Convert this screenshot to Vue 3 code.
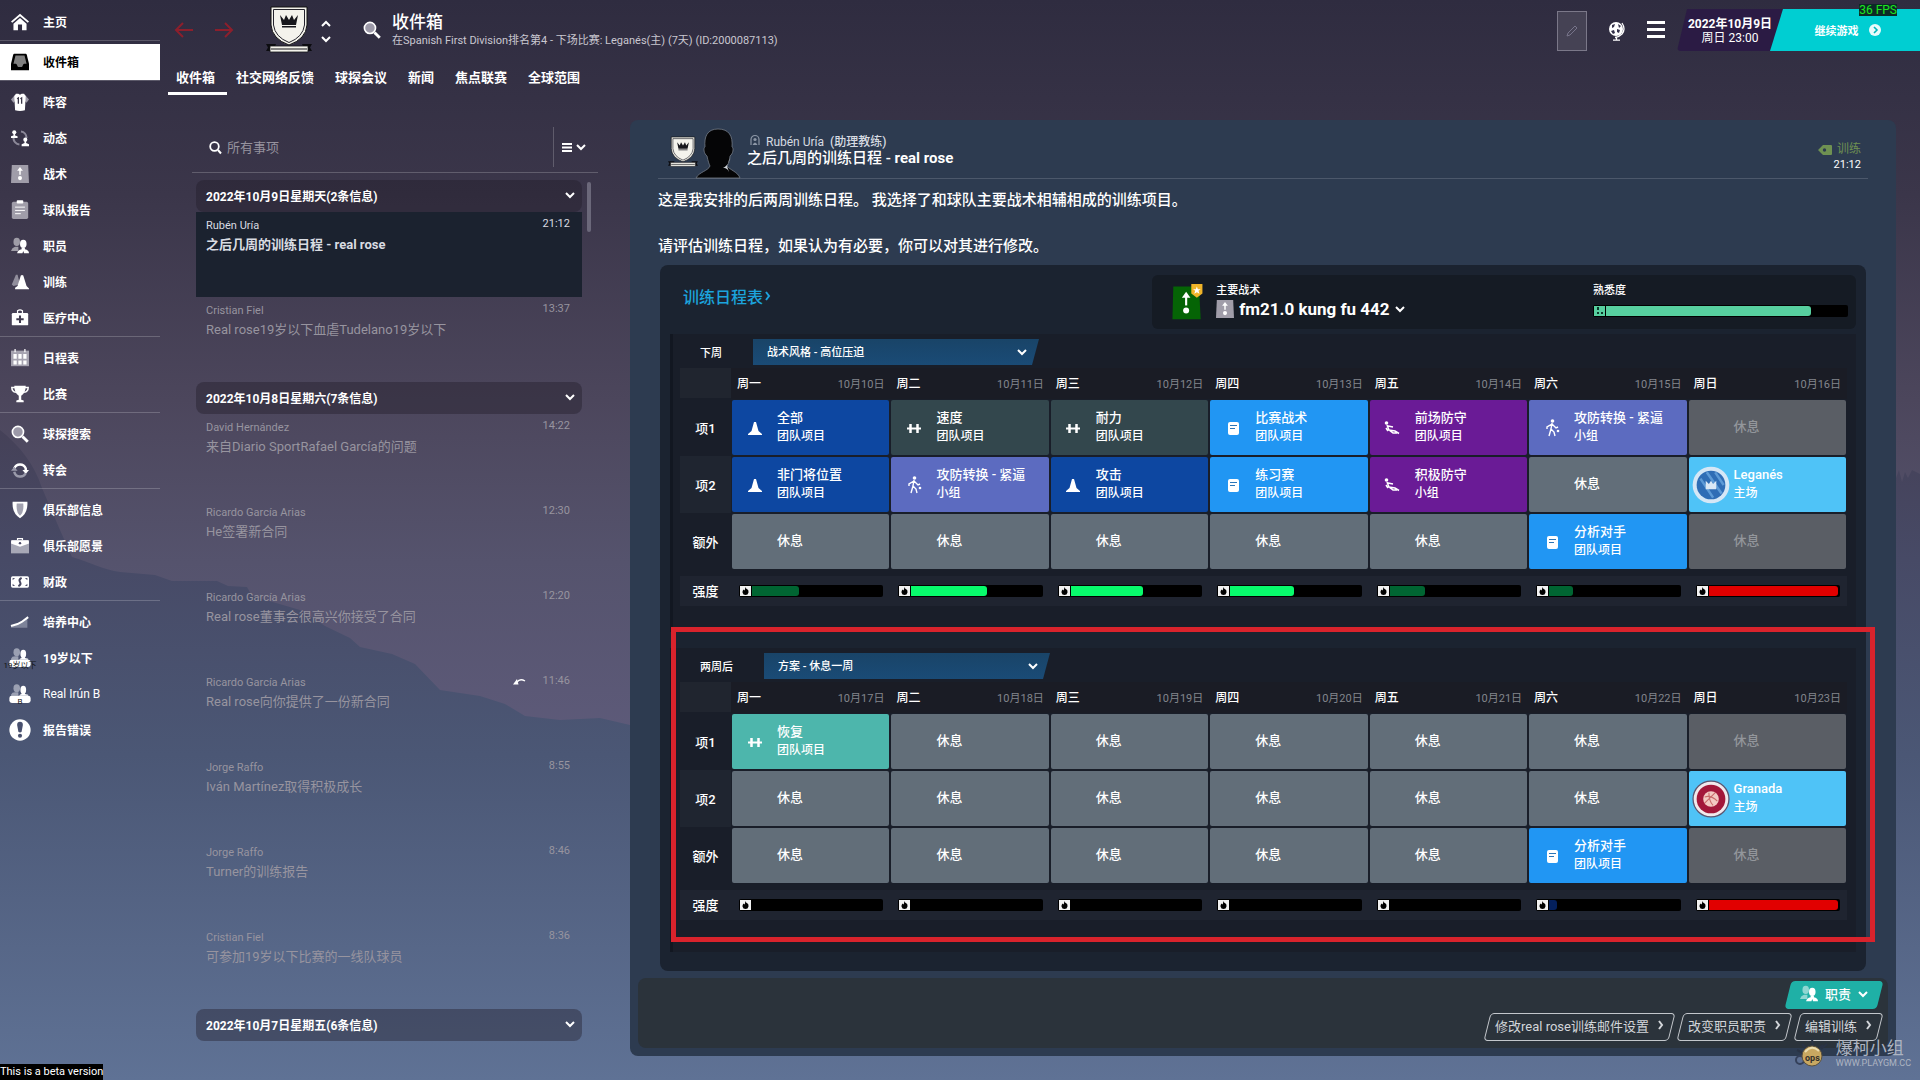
<template>
  <div class="game">
    <svg class="backdrop" viewBox="0 0 1920 1080" preserveAspectRatio="none" aria-hidden="true">
      <defs>
        <linearGradient id="sky" x1="0" y1="0" x2="0" y2="1">
          <stop offset="0" stop-color="#2f2c40" />
          <stop offset="0.18" stop-color="#3b364a" />
          <stop offset="0.37" stop-color="#4c465c" />
          <stop offset="0.52" stop-color="#55536d" />
          <stop offset="0.68" stop-color="#5d5a79" />
          <stop offset="0.8" stop-color="#566080" />
          <stop offset="1" stop-color="#5f7295" />
        </linearGradient>
        <linearGradient id="hill" x1="0" y1="0" x2="0" y2="1">
          <stop offset="0" stop-color="#454158" />
          <stop offset="0.2" stop-color="#474a66" />
          <stop offset="0.5" stop-color="#4b5775" />
          <stop offset="1" stop-color="#5f7295" />
        </linearGradient>
      </defs>
      <rect width="1920" height="1080" fill="url(#sky)" />
      <path d="M0 430C20 446 34 464 42 488L60 530L72 557C90 562 104 570 120 572L155 575L172 581L217 581L228 586L247 587L252 596L300 610L325 626L350 638L360 647L392 654L415 664L440 690L480 696L505 704L525 716L560 720L600 718L630 725L900 700L1300 690L1860 560L1896 478L1899 470L1902 482L1905 472L1908 478L1912 470L1920 474V1080H0Z" fill="url(#hill)" />
    </svg>

    <nav class="sidebar">
      <div v-for="(group, g) in menu" :key="g" class="sidebar__group">
        <a v-for="item in group" :key="item.label" href="#" class="sidebar__item" :class="{ 'sidebar__item--active': item.active, 'sidebar__item--plain': item.badge === 'B' }">
          <svg class="sidebar__icon" viewBox="0 0 22 22" v-html="icons[item.icon]"></svg>
          <span>{{ item.label }}</span>
          <small v-if="item.badge" class="sidebar__badge" :class="{ 'sidebar__badge--wide': item.badge.length > 1 }">{{ item.badge }}</small>
        </a>
      </div>
    </nav>

    <div class="content">
      <header class="topbar">
        <div class="history">
          <button aria-label="后退"><svg width="18" height="16" viewBox="0 0 18 16"><path d="M8 1L1 8L8 15M1 8H18" class="line" /></svg></button>
          <button aria-label="前进"><svg width="18" height="16" viewBox="0 0 18 16"><path d="M10 1L17 8L10 15M17 8H0" class="line" /></svg></button>
        </div>
        <svg class="crest" viewBox="0 0 46 46" v-html="icons.crest"></svg>
        <div class="stepper">
          <button aria-label="上一个"><svg width="10" height="6" viewBox="0 0 10 6"><path d="M1 5L5 1L9 5" class="line" /></svg></button>
          <button aria-label="下一个"><svg width="10" height="6" viewBox="0 0 10 6"><path d="M1 1L5 5L9 1" class="line" /></svg></button>
        </div>
        <svg class="topbar__search" viewBox="0 0 22 22" v-html="icons.search"></svg>
        <div class="heading">
          <h1>收件箱</h1>
          <p>在Spanish First Division排名第4 - 下场比赛: Leganés(主) (7天) (ID:2000087113)</p>
        </div>
        <button class="edit" aria-label="编辑"><svg width="12" height="12" viewBox="0 0 12 12"><path d="M1 11L2 8L9 1L11 3L4 10Z" fill="none" stroke="#77748a" /></svg></button>
        <button class="topbar__icon" aria-label="世界">
          <svg width="18" height="20" viewBox="0 0 18 20">
            <circle cx="8" cy="8" r="7" fill="#fff" />
            <path d="M4 4L7 3L6 6L4 7ZM10 3L13 5L11 7ZM3 10L6 9L7 12L5 13ZM9 8L12 9L11 12L9 11Z" fill="#33304a" />
            <path d="M14 2Q18 8 14 13Q11 16 7 16.500M8.500 16V19M5 19.200H12" fill="none" stroke="#fff" stroke-width="1.300" />
          </svg>
        </button>
        <button class="topbar__icon" aria-label="菜单"><svg width="18" height="18" viewBox="0 0 18 18"><path d="M0 1.500H18M0 8.500H18M0 15.500H18" stroke="#fff" stroke-width="3" /></svg></button>
        <div class="clock">
          <strong>2022年10月9日</strong>
          <span>周日 23:00</span>
        </div>
        <button class="continue">
          继续游戏
          <svg width="12" height="12" viewBox="0 0 12 12"><circle cx="6" cy="6" r="6" fill="#e9fbfb" /><path d="M5 3L8 6L5 9" fill="none" stroke="#00b5b9" stroke-width="1.600" /></svg>
        </button>
        <span class="fps">36 FPS</span>
      </header>

      <nav class="tabs">
        <a v-for="(tab, i) in tabs" :key="tab" href="#" :class="{ current: i === 0 }">{{ tab }}</a>
      </nav>

      <div class="columns">
        <section class="inbox">
          <div class="filter">
            <svg width="13" height="13" viewBox="0 0 13 13"><circle cx="5.500" cy="5.500" r="4.300" fill="none" stroke="#fff" stroke-width="1.800" /><path d="M9 9L12 12.500" stroke="#fff" stroke-width="2" /></svg>
            <input v-model="query" type="text" placeholder="所有事项" aria-label="所有事项">
            <button aria-label="排序">
              <svg width="10" height="9" viewBox="0 0 10 9"><path d="M0 1H10M0 4.500H10M0 8H10" stroke="#fff" stroke-width="2" /></svg>
              <svg width="10" height="6" viewBox="0 0 10 6"><path d="M1 1L5 5L9 1" class="line" /></svg>
            </button>
          </div>
          <div class="list">
            <template v-for="day in days" :key="day.title">
              <button class="day">
                {{ day.title }}
                <svg width="10" height="6" viewBox="0 0 10 6"><path d="M1 1L5 5L9 1" class="line" /></svg>
              </button>
              <a v-for="mail in day.mails" :key="mail.time" href="#" class="mail" :class="{ 'mail--open': mail.open }">
                <span class="mail__top">
                  <span class="mail__from">{{ mail.from }}</span>
                  <svg v-if="mail.replied" width="13" height="7" viewBox="0 0 13 7"><path d="M0 6.500L4 1L5.500 6.500Z" fill="#fff" /><path d="M4 4Q7 0 12 3" fill="none" stroke="#fff" stroke-width="1.400" /></svg>
                  <time>{{ mail.time }}</time>
                </span>
                <span class="mail__subject">{{ mail.subject }}</span>
              </a>
            </template>
            <span class="list__scroll"></span>
          </div>
        </section>

        <main class="reader">
          <article class="letter">
            <header class="letter__head">
              <svg class="letter__crest" viewBox="0 0 46 46" v-html="icons.crest"></svg>
              <svg class="letter__face" viewBox="0 0 44 49">
                <path d="M22 0C11 0 8 8 9 18C7 19 8 25 11 27C12 32 13 35 14 37C12 42 3 43 0 49H44C42 43 34 41 31 37C33 34 34 31 34 27C37 25 38 19 36 18C37 7 33 0 22 0Z" fill="#050506" stroke="#737b86" stroke-width="0.800" />
                <path d="M34 28C33 34 31 37 27 39C31 39 32 41 33 43L31 37Z" fill="#cfd3d8" />
              </svg>
              <div class="letter__title">
                <p>
                  <svg width="10" height="11" viewBox="0 0 10 11"><path d="M1 10V4.500A4 4 0 0 1 9 4.500V10" fill="none" stroke="#8d97a6" stroke-width="1.200" /><circle cx="5" cy="4.500" r="1.600" fill="#8d97a6" /><path d="M2.500 10Q5 5 7.500 10Z" fill="#8d97a6" /></svg>
                  Rubén Uría <b>(助理教练)</b>
                </p>
                <h2>之后几周的训练日程 - <b>real rose</b></h2>
              </div>
              <div class="letter__meta">
                <span class="tag">
                  <svg width="14" height="10" viewBox="0 0 14 10"><path fill-rule="evenodd" d="M5 0H13Q14 0 14 1V9Q14 10 13 10H5L0 5ZM6.500 3.300A1.700 1.700 0 1 0 6.500 6.700A1.700 1.700 0 1 0 6.500 3.300Z" fill="#6f9152" /></svg>
                  训练
                </span>
                <time>21:12</time>
              </div>
            </header>

            <p class="letter__text">这是我安排的后两周训练日程。 我选择了和球队主要战术相辅相成的训练项目。</p>
            <p class="letter__text">请评估训练日程，如果认为有必要，你可以对其进行修改。</p>

            <section class="planner">
              <div class="planner__head">
                <a href="#" class="planner__link">训练日程表<svg width="6" height="10" viewBox="0 0 6 10"><path d="M1 1L4 5L1 9" class="line" /></svg></a>
                <div class="tactic">
                  <svg class="tactic__icon" viewBox="0 0 36 42">
                    <path d="M2 3H32L34 41H1Z" fill="#056405" />
                    <path d="M17 25V12" stroke="#fff" stroke-width="2.500" />
                    <path d="M12 16L17 9L22 16Z" fill="#fff" />
                    <circle cx="17" cy="31" r="3.500" fill="#fff" />
                    <path d="M23 0H36V11L29.500 16L23 11Z" fill="#f0b429" />
                    <path d="M29.500 3L30.700 6H34L31.400 8L32.500 11.500L29.500 9.500L26.500 11.500L27.600 8L25 6H28.300Z" fill="#fff" />
                  </svg>
                  <div class="tactic__name">
                    <label for="tactic">主要战术</label>
                    <div class="tactic__pick">
                      <svg width="18" height="18" viewBox="0 0 22 22" v-html="icons.tactics"></svg>
                      <select id="tactic"><option>fm21.0 kung fu 442</option></select>
                      <svg width="10" height="6" viewBox="0 0 10 6"><path d="M1 1L5 5L9 1" class="line" /></svg>
                    </div>
                  </div>
                  <div class="tactic__level">
                    <span>熟悉度</span>
                    <div class="meter meter--mint">
                      <svg class="meter__icon" width="11" height="10" viewBox="0 0 11 10"><path d="M3 1H5V4H3ZM3 6H5V8H3ZM7 6H9V8H7Z" fill="#0c3b2c" /></svg>
                      <div class="meter__track"><div class="meter__fill mint" :style="{ width: '85%' }"></div></div>
                    </div>
                  </div>
                </div>
              </div>

              <div v-for="(week, w) in weeks" :key="week.name" class="week">
                <div class="week__bar">
                  <label :for="'plan' + w">{{ week.name }}</label>
                  <div class="plan">
                    <select :id="'plan' + w"><option>{{ week.plan }}</option></select>
                    <svg width="10" height="6" viewBox="0 0 10 6"><path d="M1 1L5 5L9 1" class="line" /></svg>
                  </div>
                </div>
                <table>
                  <thead>
                    <tr>
                      <td></td>
                      <th v-for="(name, i) in weekdays" :key="name" scope="col">
                        <div class="date"><span>{{ name }}</span><small>10月{{ week.start + i }}日</small></div>
                      </th>
                    </tr>
                  </thead>
                  <tbody>
                    <tr v-for="row in week.rows" :key="row.label">
                      <th scope="row">{{ row.label }}</th>
                      <td v-for="(cell, i) in row.cells" :key="i">
                        <div class="cell" :class="cell.kind">
                          <span class="cell__icon"><svg v-if="cell.icon" :width="cell.size || 18" :height="cell.size || 18" viewBox="0 0 18 18" v-html="icons[cell.icon]"></svg></span>
                          <span class="cell__text">{{ cell.title }}<small v-if="cell.note">{{ cell.note }}</small></span>
                        </div>
                      </td>
                    </tr>
                  </tbody>
                  <tfoot>
                    <tr>
                      <th scope="row">强度</th>
                      <td v-for="(load, i) in week.loads" :key="i">
                        <div class="meter">
                          <svg class="meter__icon" width="11" height="10" viewBox="0 0 11 10"><path d="M5 1Q6 3 7 3Q9 4 8.500 6.500Q8 9 5.500 9Q3 9 2.500 6.500Q2.300 5 3.500 3.500L4.500 4.500Q5.500 3 5 1Z" fill="#000" /></svg>
                          <div class="meter__track"><div class="meter__fill" :class="load[1]" :style="{ width: load[0] + '%' }"></div></div>
                        </div>
                      </td>
                    </tr>
                  </tfoot>
                </table>
                <div v-if="week.marked" class="week__mark"></div>
              </div>
            </section>
          </article>

          <footer class="actions">
            <button class="pill pill--solid">
              <svg width="18" height="18" viewBox="0 0 22 22" v-html="icons.people"></svg>
              职责
              <svg width="10" height="6" viewBox="0 0 10 6"><path d="M1 1L5 5L9 1" class="line" /></svg>
            </button>
            <div class="actions__row">
              <button v-for="action in actions" :key="action" class="pill">
                {{ action }}
                <svg width="6" height="10" viewBox="0 0 6 10"><path d="M1 1L4 5L1 9" class="line" /></svg>
              </button>
            </div>
          </footer>
        </main>
      </div>
    </div>

    <div class="beta">This is a beta version</div>
    <div class="watermark">
      <svg width="36" height="36" viewBox="0 0 36 36">
        <path d="M8 8L13 13M18 3L19 10M3 14L9 17M27 13L33 8M25 12L29 9" stroke="#2a3345" stroke-width="2" />
        <circle cx="6" cy="24" r="4" fill="none" stroke="#34405a" stroke-width="2" />
        <circle cx="18" cy="20" r="10" fill="#c9a861" stroke="#5b5140" />
        <path d="M11 16Q18 8 25 15" stroke="#ecdcae" stroke-width="2" fill="none" />
        <text x="11" y="25" font-size="9" font-weight="700" fill="#33302c">ops</text>
      </svg>
      <div><b>爆柯小组</b><span>WWW.PLAYGM.CC</span></div>
    </div>
  </div>
</template>

<script setup>
import { ref } from 'vue'

const query = ref('')

// inner markup of the icons, 22x22 for the menu and 18x18 for the sessions
const icons = {
  home: '<path fill="#fff" d="M11 1L22 10.500L20.500 12L11 4L1.500 12L0 10.500ZM11 6L19 13V21H13.500V14H8.500V21H3V13Z"/>',
  inbox: '<path fill="#000" d="M4 1H18Q19 1 19.300 2L22 13V21H0V13L2.700 2Q3 1 4 1Z"/><path fill="#808080" d="M5.500 3H16.500L19 13H16Q15 13 14.500 15Q14 17 13 17H9Q8 17 7.500 15Q7 13 6 13H3Z"/>',
  shirt: '<path fill="#9b98a6" d="M5 2L0 8L3 12L6 9ZM17 2L22 8L19 12L16 9Z"/><path fill="#fff" d="M6 1H9Q11 3 13 1H16L18 4L17 21Q11 23 5 21L4 4Z"/><path d="M7.500 7L9 6V13M11.500 7L13 6V13" fill="none" stroke="#3a3648" stroke-width="1.600"/>',
  dynamics: '<circle cx="11" cy="11" r="8" fill="none" stroke="#8b8898" stroke-width="2.500" stroke-dasharray="12 13" stroke-dashoffset="12"/><circle cx="4" cy="4" r="2.500" fill="#fff"/><path fill="#fff" d="M3 5H5V8L8 9V11H0V9L3 8Z"/><circle cx="17.500" cy="13" r="2.500" fill="#fff"/><path fill="#fff" d="M16.500 14H18.500V17L22 18.500V21H13V18.500L16.500 17Z"/>',
  tactics: '<path fill="#a09da9" d="M1 0H21L22 22H0Z"/><path d="M11 12V5" stroke="#fff" stroke-width="1.800"/><path fill="#fff" d="M7.500 7L11 2.500L14.500 7Z"/><circle cx="11" cy="16" r="2.500" fill="#fff"/>',
  report: '<rect x="1" y="1" width="20" height="21" rx="2" fill="#a09da9"/><rect x="7" y="-1" width="8" height="4" rx="1" fill="#fff"/><path d="M5 7.500H17M5 11.500H17M5 15.500H12" stroke="#fff" stroke-width="1.200"/>',
  people: '<g fill="#fff" opacity=".5"><ellipse cx="7" cy="6" rx="4" ry="5"/><path d="M0 17Q1 13 5 12H9V17Z"/></g><ellipse cx="15" cy="8.500" rx="4" ry="5" fill="#fff"/><path fill="#fff" d="M7.500 20Q8 16 13 15V13H17V15Q22 16 22 20H16L15 17L14 20Z"/>',
  cones: '<path fill="#918e9c" d="M6 2L8 2L11 14L3 16L1 14Z"/><path fill="#fff" d="M12 3Q13.500 2 15 3L19 16L22 19V20H5V18L8 16Z"/>',
  medical: '<path d="M8 5V2Q11 0 14 2V5" fill="none" stroke="#fff" stroke-width="1.500"/><rect x="1" y="5" width="20" height="15" rx="1.500" fill="#fff"/><path d="M11 8V17M6.500 12.500H15.500" stroke="#3f3a4e" stroke-width="2.500"/>',
  calendar: '<path fill="#a6a3b0" d="M0 2H22V21H0Z"/><path fill="#fff" d="M3 6H7V12H3ZM9 6H13V12H9ZM15 6H19V12H15ZM3 14H7V19H3ZM9 14H13V19H9ZM15 14H19V19H15Z"/><path d="M5 0V4M17 0V4" stroke="#fff" stroke-width="1.500"/>',
  cup: '<path fill="#fff" d="M4 1H18Q18 10 12.500 13V18L15.500 19V21H6.500V19L9.500 18V13Q4 10 4 1Z"/><path d="M5 3H1Q1 8 6 9M17 3H21Q21 8 16 9" fill="none" stroke="#fff" stroke-width="1.800"/>',
  search: '<circle cx="8.500" cy="8.500" r="6.800" fill="#9c99a8" stroke="#fff" stroke-width="2"/><path d="M14 14L20.500 20.500" stroke="#fff" stroke-width="3.500"/>',
  transfer: '<path d="M4 9A7.500 7.500 0 0 1 18 9V12" fill="none" stroke="#fff" stroke-width="3"/><path d="M14 11H22L18 16Z" fill="#fff"/><path d="M18 15A7.500 7.500 0 0 1 4 13" fill="none" stroke="#9a9aaa" stroke-width="3"/><path d="M0 12H8L4 7Z" fill="#9a9aaa"/>',
  shield: '<path fill="#fff" d="M2 1H20Q21 15 11 21Q1 15 2 1Z"/><path fill="#a2a2b0" d="M7 3H15Q16 14 11 18Q6 14 7 3Z"/>',
  briefcase: '<path d="M8 4V2H14V4" fill="none" stroke="#fff" stroke-width="1.500"/><path fill="#a7a8b6" d="M0 4H22V20H0Z"/><path fill="#fff" d="M1 4H21Q22 4 22 8L11 12L0 8Q0 4 1 4Z"/><circle cx="11" cy="7.500" r="1.500" fill="#4a4a66"/>',
  money: '<rect x="0" y="4" width="22" height="14" rx="2" fill="#fff"/><path d="M2 6H5L2 9ZM20 6H17L20 9ZM2 16H5L2 13ZM20 16H17L20 13Z" fill="#55556f"/><path d="M13 6Q9 8 11 11T9 16" fill="none" stroke="#45455f" stroke-width="2.500"/>',
  growth: '<path fill="#7d8399" d="M0 17L10 13L20 6V18H0Z"/><path d="M0 16L8 13.500L13 11L21 5" fill="none" stroke="#fff" stroke-width="2.500"/>',
  squad: '<g fill="#9ba0b2"><ellipse cx="7" cy="4" rx="4" ry="5"/><path d="M0 12Q1 9 5 9H9V13H0Z"/></g><ellipse cx="15" cy="6" rx="3.500" ry="5" fill="#fff"/><path d="M10 13Q11 11 13 11V9H17V11L21 12V13Z" fill="#fff"/><rect x="-2" y="13" width="26" height="9" rx="3" fill="#fff"/>',
  alert: '<circle cx="11" cy="11" r="13" fill="#fff"/><path fill="#48506e" d="M7.500 5Q7.500 1 11 1T14.500 5L13 13Q11 15 9 13Z"/><circle cx="11" cy="18" r="2.500" fill="#48506e"/>',
  crest: '<path fill="#f4f3ec" stroke="#111" stroke-width="1" d="M5 0H41V18Q40 32 23 38Q6 32 5 18Z"/><path fill="none" stroke="#24232c" d="M7.500 2.500H38.500V18Q37 30 23 35.500Q9 30 7.500 18Z"/><path fill="#17171c" d="M14 8L18 13L20 8L23 13L26 8L28 13L32 8L30 18H16ZM16 19H30V20.500H16Z"/><path fill="#0c0c10" d="M0 37H10L7 44H0L2 40.500ZM46 37H36L39 44H46L44 40.500Z"/><path fill="#f4f3ec" stroke="#15151a" stroke-width=".8" d="M4 39H42V45H4Z"/><path d="M5 42H41" stroke="#15151a"/>',
  cone: '<path fill="#fff" d="M8 3H10L12.500 12L16 15V16H2V15L5.500 12Z"/>',
  weights: '<path d="M5.500 5V14M12.500 5V14" stroke="#fff" stroke-width="2.500"/><path d="M2 9.500H16" stroke="#fff" stroke-width="2"/>',
  paper: '<rect x="4" y="3" width="11" height="13" rx="2" fill="#fff"/><path d="M6 6.500H13M6 9.500H11" stroke="#2b76b8" stroke-width="1.200"/>',
  tackle: '<circle cx="3.500" cy="4" r="1.800" fill="#fff"/><path d="M4 6L6 11L12 12L16 14.500M6 11L10 14H14M5 7L10 8M3 9L5 12" fill="none" stroke="#fff" stroke-width="1.500"/>',
  runner: '<circle cx="9.500" cy="2" r="1.800" fill="#fff"/><path d="M9 4L8 10L11 13L12 17M8 10L6 17M9 5L4 8V10M9 5L13 9L15 8" fill="none" stroke="#fff" stroke-width="1.400"/><circle cx="15" cy="12" r="1.300" fill="#fff"/>',
  leganes: '<circle cx="9" cy="9" r="8.700" fill="#d5e7f6"/><circle cx="9" cy="9" r="6.800" fill="#2f6db5"/><path d="M4 6L10 15M7 3L14 13M11 3L15 9" stroke="#5d9ad6" stroke-width="1.200"/><path fill="#dbe8f5" d="M6.500 7L8 8.500L9 7L10 8.500L11.500 7V11H6.500Z"/>',
  granada: '<circle cx="9" cy="9" r="8.500" fill="#f2e9ec" stroke="#5c5570" stroke-width=".6"/><circle cx="9" cy="9" r="6.800" fill="#a3173a"/><circle cx="9" cy="9" r="3.700" fill="#f3c9c2"/><path d="M6 8Q9 7 12 10M8 6Q8 10 10 12M11 6Q9 8 6 11" fill="none" stroke="#c96a6a" stroke-width=".5"/>',
}

const menu = [
  [{ label: '主页', icon: 'home' }],
  [{ label: '收件箱', icon: 'inbox', active: true }],
  [
    { label: '阵容', icon: 'shirt' },
    { label: '动态', icon: 'dynamics' },
    { label: '战术', icon: 'tactics' },
    { label: '球队报告', icon: 'report' },
    { label: '职员', icon: 'people' },
    { label: '训练', icon: 'cones' },
    { label: '医疗中心', icon: 'medical' },
  ],
  [{ label: '日程表', icon: 'calendar' }, { label: '比赛', icon: 'cup' }],
  [{ label: '球探搜索', icon: 'search' }, { label: '转会', icon: 'transfer' }],
  [
    { label: '俱乐部信息', icon: 'shield' },
    { label: '俱乐部愿景', icon: 'briefcase' },
    { label: '财政', icon: 'money' },
  ],
  [
    { label: '培养中心', icon: 'growth' },
    { label: '19岁以下', icon: 'squad', badge: '19岁以下' },
    { label: 'Real Irún B', icon: 'squad', badge: 'B' },
    { label: '报告错误', icon: 'alert' },
  ],
]

const tabs = ['收件箱', '社交网络反馈', '球探会议', '新闻', '焦点联赛', '全球范围']

const days = [
  {
    title: '2022年10月9日星期天(2条信息)',
    mails: [
      { from: 'Rubén Uría', time: '21:12', subject: '之后几周的训练日程 - real rose', open: true },
      { from: 'Cristian Fiel', time: '13:37', subject: 'Real rose19岁以下血虐Tudelano19岁以下' },
    ],
  },
  {
    title: '2022年10月8日星期六(7条信息)',
    mails: [
      { from: 'David Hernández', time: '14:22', subject: '来自Diario SportRafael García的问题' },
      { from: 'Ricardo García Arias', time: '12:30', subject: 'He签署新合同' },
      { from: 'Ricardo García Arias', time: '12:20', subject: 'Real rose董事会很高兴你接受了合同' },
      { from: 'Ricardo García Arias', time: '11:46', subject: 'Real rose向你提供了一份新合同', replied: true },
      { from: 'Jorge Raffo', time: '8:55', subject: 'Iván Martínez取得积极成长' },
      { from: 'Jorge Raffo', time: '8:46', subject: 'Turner的训练报告' },
      { from: 'Cristian Fiel', time: '8:36', subject: '可参加19岁以下比赛的一线队球员' },
    ],
  },
  { title: '2022年10月7日星期五(6条信息)', mails: [] },
]

const weekdays = ['周一', '周二', '周三', '周四', '周五', '周六', '周日']

const rest = { kind: 'rest', title: '休息' }
const off = { kind: 'off', title: '休息' }
const team = (kind, icon, title, note = '团队项目') => ({ kind, icon, title, note })
const match = (icon, title) => ({ kind: 'match', icon, title, note: '主场', size: 38 })

const weeks = [
  {
    name: '下周',
    plan: '战术风格 - 高位压迫',
    start: 10,
    rows: [
      {
        label: '项1',
        cells: [
          team('navy', 'cone', '全部'),
          team('slate', 'weights', '速度'),
          team('slate', 'weights', '耐力'),
          team('blue', 'paper', '比赛战术'),
          team('purple', 'tackle', '前场防守'),
          team('indigo', 'runner', '攻防转换 - 紧逼', '小组'),
          off,
        ],
      },
      {
        label: '项2',
        cells: [
          team('navy', 'cone', '非门将位置'),
          team('indigo', 'runner', '攻防转换 - 紧逼', '小组'),
          team('navy', 'cone', '攻击'),
          team('blue', 'paper', '练习赛'),
          team('purple', 'tackle', '积极防守', '小组'),
          rest,
          match('leganes', 'Leganés'),
        ],
      },
      { label: '额外', cells: [rest, rest, rest, rest, rest, team('blue', 'paper', '分析对手'), off] },
    ],
    loads: [[36, 'low'], [58, 'mid'], [55, 'mid'], [49, 'mid'], [27, 'low'], [18, 'low'], [99, 'high']],
  },
  {
    name: '两周后',
    plan: '方案 - 休息一周',
    start: 17,
    marked: true,
    rows: [
      { label: '项1', cells: [team('teal', 'weights', '恢复'), rest, rest, rest, rest, rest, off] },
      { label: '项2', cells: [rest, rest, rest, rest, rest, rest, match('granada', 'Granada')] },
      { label: '额外', cells: [rest, rest, rest, rest, rest, team('blue', 'paper', '分析对手'), off] },
    ],
    loads: [[0, 'low'], [0, 'low'], [0, 'low'], [0, 'low'], [0, 'low'], [6, 'faint'], [99, 'high']],
  },
]

const actions = ['修改real rose训练邮件设置', '改变职员职责', '编辑训练']
</script>

<style>
body {
  margin: 0;
  background: #2f2c40;
}
</style>

<style scoped>
.game {
  position: relative;
  display: flex;
  min-height: 100vh;
  color: #fff;
  font-family: Roboto, "Noto Sans CJK SC", sans-serif;
  font-size: 12px;
}
.game * {
  box-sizing: border-box;
}
.backdrop {
  position: absolute;
  inset: 0;
  width: 100%;
  height: 100%;
}
svg {
  flex: none;
  overflow: visible;
}
.line {
  fill: none;
  stroke: currentColor;
  stroke-width: 2;
}
a {
  color: inherit;
  text-decoration: none;
}
button, select, input {
  padding: 0;
  border: 0;
  background: none;
  color: inherit;
  font: inherit;
  appearance: none;
}
h1, h2, p {
  margin: 0;
}

/* sidebar */
.sidebar {
  position: relative;
  flex: none;
  width: 160px;
  padding-top: 4px;
}
.sidebar__group {
  padding-bottom: 3px;
}
.sidebar__group::after {
  content: "";
  display: block;
  height: 1px;
  background: rgba(255, 255, 255, 0.2);
}
.sidebar__group:last-child::after {
  display: none;
}
.sidebar__item {
  position: relative;
  display: flex;
  align-items: center;
  gap: 14px;
  height: 36px;
  padding: 0 0 1px 11px;
  font-weight: 700;
}
.sidebar__item--active {
  background: #fff;
  color: #000;
}
.sidebar__item--plain {
  font-weight: 400;
}
.sidebar__icon {
  width: 18px;
  height: 18px;
}
.sidebar__badge {
  position: absolute;
  left: 10px;
  top: 19px;
  width: 20px;
  color: #222;
  font-size: 8px;
  font-weight: 400;
  line-height: 14px;
  text-align: center;
}
.sidebar__badge--wide {
  left: 3px;
  width: 34px;
  color: #111;
}

/* top bar */
.content {
  position: relative;
  flex: 1;
  min-width: 0;
}
.topbar {
  display: flex;
  align-items: flex-start;
  height: 60px;
  padding-left: 15px;
}
.history {
  display: flex;
  gap: 22px;
  padding-top: 22px;
  color: #8c1f2c;
}
.crest {
  width: 46px;
  height: 46px;
  margin: 7px 9px 0 33px;
}
.stepper {
  display: flex;
  flex-direction: column;
  gap: 9px;
  padding-top: 21px;
}
.history button, .stepper button {
  display: flex;
}
.topbar__search {
  width: 18px;
  height: 18px;
  margin: 21px 11px 0 32px;
}
.heading {
  flex: 1;
  padding-top: 10px;
  white-space: nowrap;
}
.heading h1 {
  font-size: 17px;
  font-weight: 500;
  line-height: 24px;
}
.heading p {
  color: #c9c7d0;
  font-size: 11px;
  line-height: 14px;
}
.edit {
  display: grid;
  place-items: center;
  width: 30px;
  height: 40px;
  margin-top: 11px;
  border: 1px solid #7b7889;
  background: #454254;
}
.topbar__icon {
  display: flex;
  margin: 21px 0 0 21px;
}
.clock {
  display: flex;
  flex-direction: column;
  align-items: center;
  width: 108px;
  height: 42px;
  margin: 9px -15px 0 12px;
  padding: 8px 2px 0 0;
  background: #2b1b44;
  border-radius: 4px;
  clip-path: polygon(10px 0, 100% 0, 100% 100%, 0 100%);
  line-height: 14px;
  white-space: nowrap;
}
.clock strong {
  font-weight: 700;
}
.continue {
  display: flex;
  align-items: center;
  justify-content: center;
  gap: 10px;
  width: 150px;
  height: 42px;
  margin-top: 9px;
  padding-left: 5px;
  background: #00ced2;
  clip-path: polygon(13px 0, 100% 0, 100% 100%, 0 100%);
  font-size: 11px;
  font-weight: 700;
}
.fps {
  position: absolute;
  top: 4px;
  right: 23px;
  background: #0c2a26;
  color: #1ee61e;
  font-size: 12px;
  line-height: 12px;
}
.tabs {
  display: flex;
  gap: 5px;
  height: 35px;
  padding-left: 8px;
}
.tabs a {
  padding: 8px 8px 0;
  font-size: 13px;
  font-weight: 700;
  line-height: 20px;
}
.tabs .current {
  margin-right: -4px;
  padding-right: 12px;
  border-bottom: 3px solid #fff;
}

/* inbox */
.columns {
  display: grid;
  grid-template-columns: minmax(300px, 406fr) 1266fr;
  gap: 32px;
  padding: 25px 24px 24px 32px;
}
.filter {
  display: flex;
  align-items: center;
  height: 53px;
  padding: 7px 12px 5px 17px;
  border-bottom: 1px solid rgba(255, 255, 255, 0.2);
}
.filter input {
  flex: 1;
  min-width: 0;
  padding-left: 5px;
  font-size: 13px;
  outline: 0;
}
.filter input::placeholder {
  color: #96939f;
}
.filter button {
  display: flex;
  align-items: center;
  gap: 4px;
  height: 40px;
  padding-left: 8px;
  border-left: 1px solid rgba(255, 255, 255, 0.2);
}
.list {
  position: relative;
  display: flex;
  flex-direction: column;
  padding: 7px 16px 0 4px;
}
.list__scroll {
  position: absolute;
  top: 9px;
  right: 7px;
  width: 4px;
  height: 50px;
  border-radius: 2px;
  background: #6b687a;
}
.day {
  display: flex;
  align-items: center;
  justify-content: space-between;
  height: 32px;
  padding: 0 7px 2px 10px;
  border-radius: 8px;
  background: rgba(32, 28, 40, 0.4);
  font-weight: 700;
}
.mail {
  height: 85px;
  padding: 5px 12px 0 10px;
  color: #97949f;
}
.mail__top {
  display: flex;
  font-size: 11px;
  line-height: 14px;
}
.mail__from {
  flex: 1;
  padding-top: 2px;
}
.mail__top svg {
  margin: 4px 17px 0 0;
}
.mail__subject {
  display: block;
  padding-top: 2px;
  font-size: 13px;
  line-height: 20px;
}
.mail--open {
  background: #1b222f;
  color: #d9dce2;
}
.mail--open .mail__subject {
  font-weight: 700;
}

/* reader */
.reader {
  display: flex;
  flex-direction: column;
  justify-content: space-between;
  gap: 7px;
  padding-bottom: 8px;
  border-radius: 8px;
  background: #2d3b50;
}
.letter {
  padding: 8px 28px 0;
}
.letter__head {
  display: flex;
  align-items: flex-end;
  height: 51px;
  border-bottom: 1px solid #4c586b;
}
.letter__crest {
  width: 30px;
  height: 32px;
  margin: 0 0 10px 10px;
}
.letter__face {
  width: 44px;
  height: 49px;
  margin-left: -2px;
}
.letter__title {
  flex: 1;
  align-self: flex-start;
  padding: 7px 0 0 7px;
}
.letter__title p {
  display: flex;
  gap: 6px;
  padding-left: 3px;
  color: #d7dbe2;
  line-height: 15px;
}
.letter__title p b {
  font-weight: 500;
}
.letter__title h2 {
  font-size: 15px;
  font-weight: 500;
  line-height: 16px;
}
.letter__meta {
  display: flex;
  flex-direction: column;
  align-self: flex-start;
  align-items: flex-end;
  padding: 14px 7px 0 0;
  font-size: 11px;
  line-height: 15px;
}
.tag {
  display: flex;
  align-items: center;
  gap: 5px;
  color: #6f9152;
  font-size: 12px;
}
.letter__text {
  padding-top: 9px;
  font-size: 15px;
  font-weight: 500;
  line-height: 24px;
}
.letter__text + .letter__text {
  padding: 22px 0 7px;
}
.planner {
  margin: 0 2px;
  padding: 10px 10px 19px;
  border-radius: 8px;
  background: #1b2330;
}
.planner__head {
  display: flex;
  justify-content: space-between;
  padding-left: 13px;
}
.planner__link {
  display: flex;
  gap: 2px;
  padding-top: 13px;
  color: #1ca3dc;
  font-size: 16px;
  font-weight: 500;
  line-height: 20px;
}
.planner__link svg {
  margin-top: 3px;
}
.tactic {
  display: flex;
  width: 60%;
  height: 54px;
  padding: 9px 8px 0 18px;
  border-radius: 6px;
  background: #151b24;
}
.tactic__icon {
  width: 34px;
  height: 36px;
}
.tactic__name {
  flex: 1;
  padding-left: 12px;
}
.tactic__name label, .tactic__level span {
  display: block;
  font-size: 11px;
  font-weight: 500;
  line-height: 13px;
}
.tactic__pick {
  display: flex;
  align-items: center;
  gap: 5px;
  padding-top: 2px;
}
.tactic__pick select {
  height: 20px;
  font-size: 17px;
  font-weight: 700;
}
.tactic__level {
  width: 255px;
}
.tactic__level .meter {
  margin-top: 8px;
}

/* weeks */
.week {
  position: relative;
  margin-top: 16px;
  padding: 5px 9px 26px 7px;
  border-left: 3px solid #121721;
  background: #191e29;
}
.planner__head + .week {
  margin-top: 5px;
}
.week:last-child {
  padding-bottom: 32px;
}
.week__bar {
  display: flex;
  align-items: center;
  gap: 31px;
  padding: 0 0 3px 20px;
}
.week__bar label {
  min-width: 22px;
  font-size: 11px;
  font-weight: 500;
}
.plan {
  position: relative;
  width: 286px;
  background: linear-gradient(#194468, #1a4b76);
  clip-path: polygon(0 0, 100% 0, calc(100% - 7px) 100%, 0 100%);
}
.plan select {
  display: block;
  width: 100%;
  height: 26px;
  padding-left: 14px;
  font-size: 11px;
  font-weight: 500;
}
.plan svg {
  position: absolute;
  top: 10px;
  right: 12px;
}
.week__mark {
  position: absolute;
  inset: -21px -19px 10px -2px;
  border: 5px solid #d9232c;
  pointer-events: none;
}
table {
  width: 100%;
  border-spacing: 0;
  table-layout: fixed;
}
th, td {
  padding: 1px;
  font-weight: 500;
}
thead th {
  height: 31px;
  padding: 0;
  background: #1a1c25;
}
thead td {
  width: 51px;
  border-bottom: 1px solid #191e29;
  background: #20252f;
}
.date {
  display: flex;
  justify-content: space-between;
  align-items: center;
  padding: 0 6px 2px;
  font-size: 12px;
}
.date small {
  color: #83868d;
  font-size: 11px;
  font-weight: 400;
}
tbody th {
  font-size: 13px;
}
tbody tr:nth-child(2) th {
  background: #1f2530;
}
.cell {
  display: flex;
  align-items: center;
  height: 55px;
  border-radius: 2px;
  font-size: 13px;
  line-height: 18px;
  white-space: nowrap;
}
.cell__icon {
  display: flex;
  justify-content: center;
  width: 45px;
}
.cell__text {
  padding-bottom: 1px;
}
.cell small {
  display: block;
  font-size: 12px;
}
.navy { background: #0d47a1; }
.slate { background: #33474d; }
.blue { background: #2196f3; }
.purple { background: #6a1b96; }
.indigo { background: #5c6bc0; }
.teal { background: #4db6ac; }
.match { background: #4fc3f7; }
.rest { background: #626e79; }
.off {
  background: #5a5e65;
  color: #93969b;
}
tfoot th, tfoot td {
  height: 36px;
  padding: 0 7px 0 8px;
  border-top: 6px solid transparent;
  background: #1f2430;
  background-clip: padding-box;
}
tfoot th {
  padding: 0 0 2px;
  font-size: 13px;
}
.meter {
  display: flex;
  height: 12px;
  padding: 1px;
  border-radius: 2px;
  background: #000;
}
.meter__icon {
  background: #f2f2f2;
}
.meter--mint .meter__icon {
  background: #57cf9f;
}
.meter__track {
  flex: 1;
  padding-left: 1px;
}
.meter__fill {
  height: 10px;
  border-radius: 0 3px 3px 0;
}
.mint { background: #57cf9f; }
.low { background: #006532; }
.mid { background: #08fb6c; }
.high { background: #e10000; }
.faint { background: #04205c; }

/* footer */
.actions {
  display: flex;
  flex-direction: column;
  align-items: flex-end;
  gap: 4px;
  margin: 0 8px;
  padding: 3px 8px 7px;
  border-radius: 8px;
  background: #2b333b;
}
.actions__row {
  display: flex;
  gap: 8px;
}
.pill {
  position: relative;
  z-index: 0;
  display: flex;
  align-items: center;
  gap: 9px;
  height: 28px;
  padding: 0 8px 4px;
  color: #d3d6da;
  font-size: 13px;
}
.pill::before {
  content: "";
  position: absolute;
  inset: 0;
  z-index: -1;
  border: 1px solid #c3c7cc;
  border-radius: 4px;
  transform: skewX(-14deg);
}
.pill--solid {
  padding: 0 12px 3px;
  color: #fff;
  font-weight: 500;
  gap: 7px;
}
.pill--solid::before {
  border: 0;
  background: #1fb0a6;
}

.beta {
  position: absolute;
  left: 0;
  bottom: 0;
  background: #000;
  font-size: 11px;
  line-height: 16px;
}
.watermark {
  position: absolute;
  right: 9px;
  bottom: 8px;
  display: flex;
  align-items: center;
  gap: 6px;
  color: #aeb5c2;
}
.watermark div {
  display: flex;
  flex-direction: column;
  line-height: 12px;
}
.watermark b {
  font-size: 17px;
  font-weight: 400;
  line-height: 18px;
}
.watermark span {
  font-size: 9px;
}
</style>
